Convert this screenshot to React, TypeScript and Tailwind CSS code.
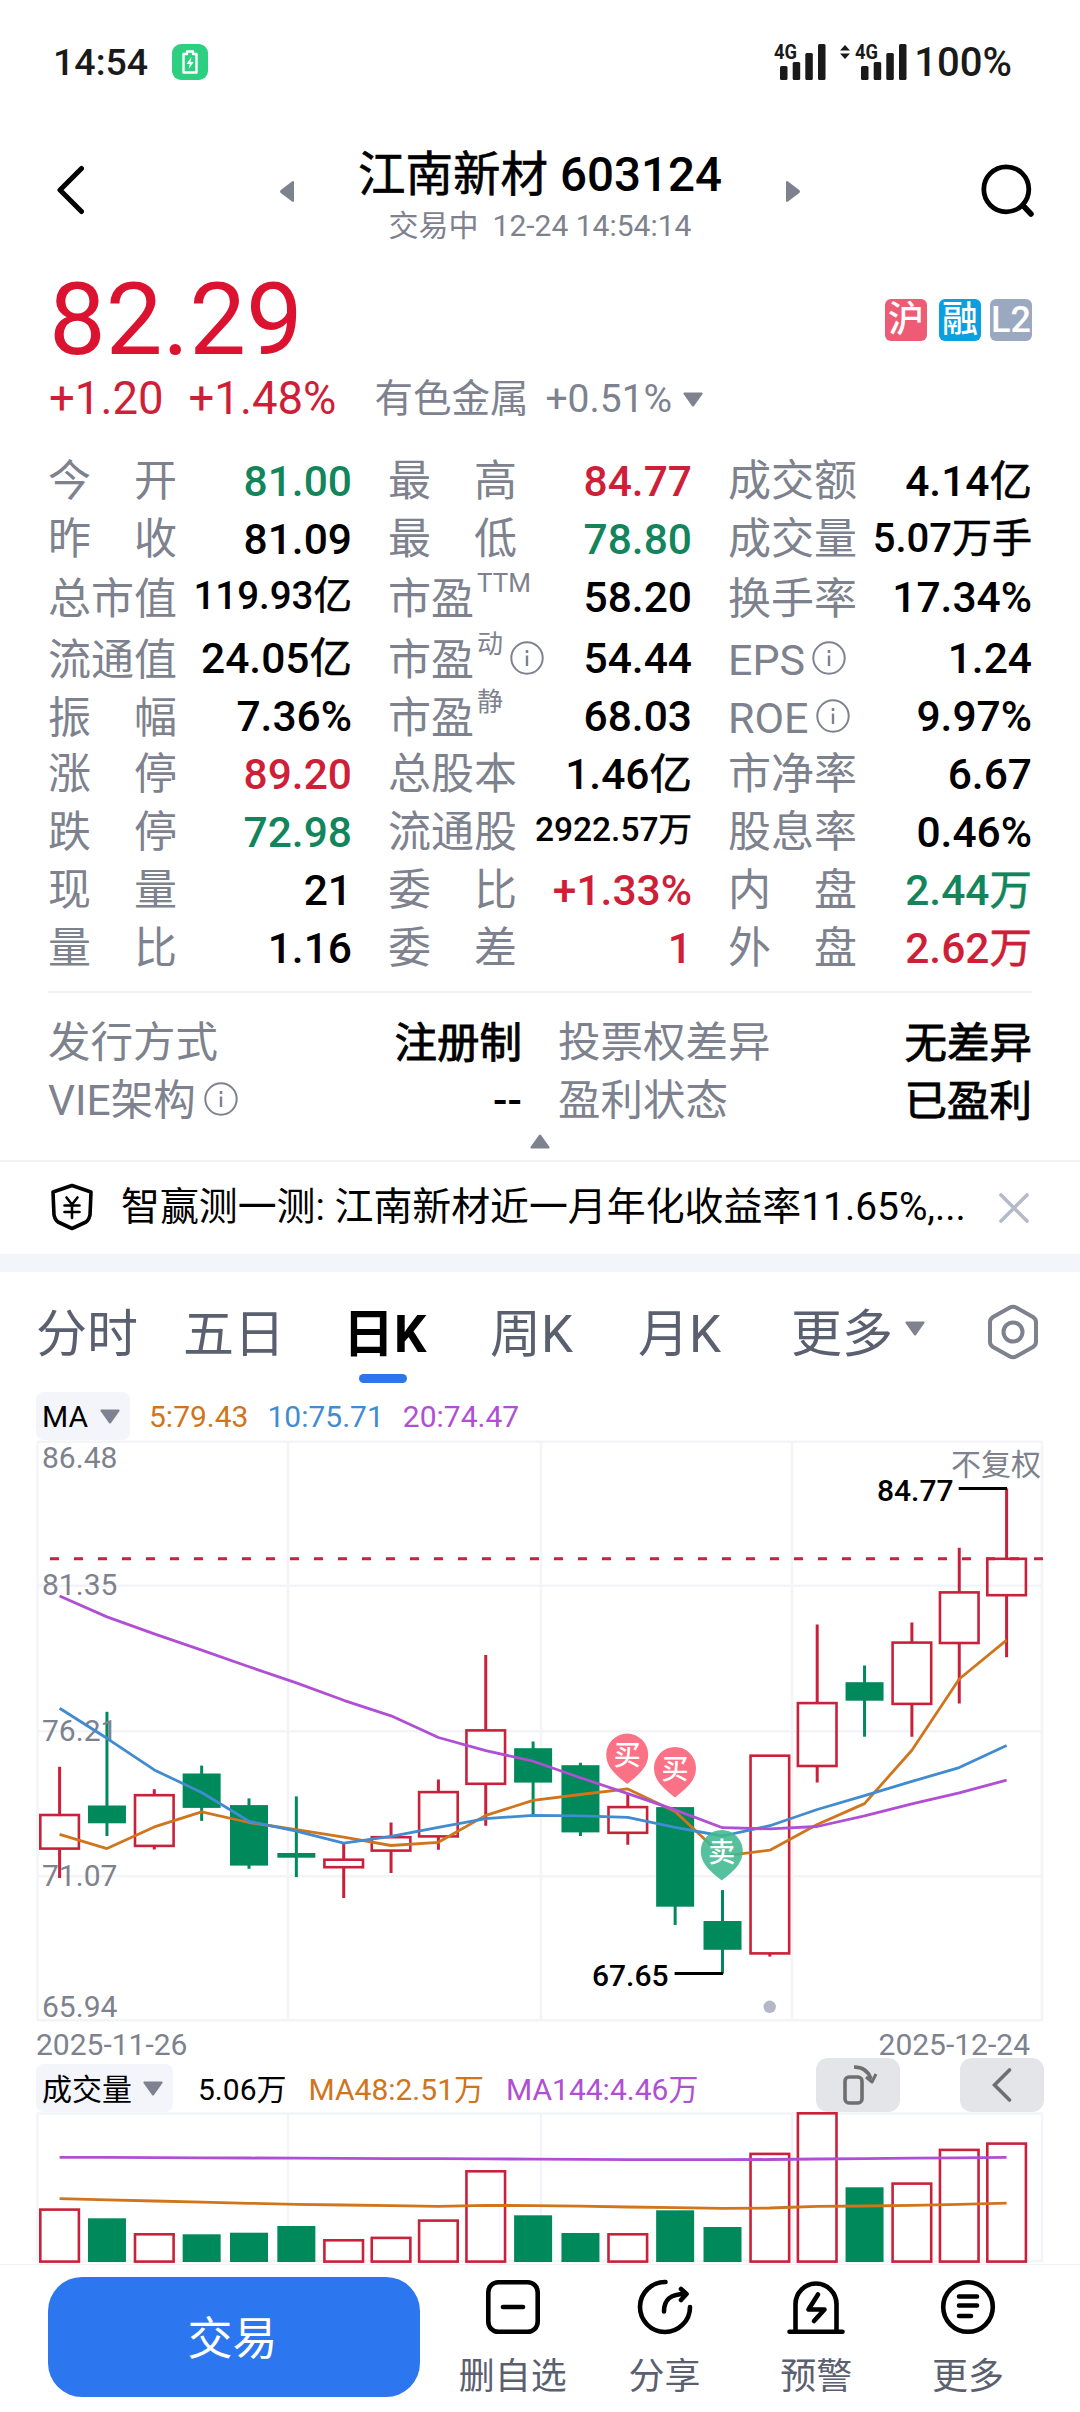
import type { ReactNode } from "react";

const RED = "#c9213a";
const GREEN = "#00895b";
const ORANGE = "#d0751c";
const BLUE = "#418bd0";
const PURPLE = "#b04fd4";

const STEP = 47.35;
const cx = (i: number) => 23.6 + i * STEP;

// [body top, body bottom, high, low, rising]
const candles: [number, number, number, number, boolean][] = [
  [375, 408.6, 326.8, 437.9, true],
  [365.5, 383.3, 271.8, 396, false],
  [355.2, 405.9, 349.3, 409.4, true],
  [333.5, 367.9, 325.6, 380.9, false],
  [365.1, 425.6, 358.4, 428.8, false],
  [413, 417.7, 356.4, 437.1, false],
  [419.7, 427.2, 403.9, 458.1, true],
  [397.2, 410.6, 382.5, 433.1, true],
  [352.1, 396.4, 339.4, 409.8, true],
  [290.4, 343.8, 214.9, 385.7, true],
  [308.2, 342.6, 301.5, 375.4, false],
  [325.2, 392.4, 322.8, 396, false],
  [367.1, 392.8, 353.7, 404.7, true],
  [367.1, 466.7, 367.1, 484.9, false],
  [481, 509.8, 450.1, 533.6, false],
  [315.7, 513.4, 315.7, 516.6, true],
  [263.1, 326, 184.4, 342.6, true],
  [242.2, 260.7, 225.5, 296.7, false],
  [202.6, 263.9, 182.4, 296.7, true],
  [152.4, 203, 107.7, 263.5, true],
  [118.8, 155.2, 48.4, 217.2, true],
];

const ma5 = [394.4, 408.6, 386.9, 371.9, 382.5, 389.6, 397.2, 405.5, 402.3, 375.4, 360.4, 354.5, 348.9, 371.5, 416.1, 410.2, 384.5, 363.6, 310.2, 239, 200.2];
const ma10 = [268.3, 298.3, 329.9, 352.5, 381.3, 391.2, 403.1, 396.4, 387.3, 378.6, 375.4, 375.8, 377.4, 387.3, 396, 385.7, 369.5, 355.6, 341.4, 327.6, 305.4];
const ma20 = [156, 176.9, 193.9, 210.1, 226.7, 242.9, 260.3, 275.8, 297.5, 310.6, 321.2, 337.8, 353.7, 369.9, 387.7, 388.9, 386.5, 375.8, 363.9, 352.9, 340.2];

const volumes = [97, 106.3, 121.7, 122.3, 120.7, 114, 127.7, 125.3, 108, 58.7, 103.3, 121, 121.7, 98.3, 115, 41.3, 0.7, 75.3, 71, 37.3, 31];
const vol48 = [86.7, 87.8, 89, 90.2, 91.3, 92.3, 93, 93.7, 94.4, 93.4, 93.6, 94.2, 95, 95.6, 96.3, 96, 94.3, 94, 93.3, 92.4, 91.2];
const vol144 = [45.3, 45.4, 45.6, 45.8, 46, 46.2, 46.4, 46.6, 46.7, 46.9, 47.1, 47.4, 47.6, 47.7, 47.7, 47.5, 47, 46.6, 46.2, 45.8, 45.4];

const toPoints = (ys: number[]) => ys.map((y, i) => `${cx(i)},${y}`).join(" ");

const InfoIcon = ({ className = "" }: { className?: string }) => (
  <svg viewBox="0 0 34 34" className={`w-[34px] h-[34px] shrink-0 ${className}`} fill="none" stroke="#7e828e" strokeWidth="2">
    <circle cx="17" cy="17" r="15.7" />
    <path d="M17 14.5v10.5" strokeWidth="2.4" />
    <path d="M17 9v3" strokeWidth="2.6" />
  </svg>
);

const Down = ({ className = "" }: { className?: string }) => (
  <svg viewBox="0 0 20 15" className={`w-5 h-[15px] shrink-0 ${className}`} fill="#7e828e">
    <path d="M1 0.5h18q1 .5 .5 1.500L11 14q-1 1-2 0L.5 2Q0 1 1 .5z" />
  </svg>
);

type Cell = {
  label: string;
  sup?: string;
  info?: boolean;
  value: string;
  color?: string;
  size?: string;
};

const up = "text-[#cf1f38]";
const down = "text-[#13855c]";

const rows: Cell[][] = [
  [
    { label: "今　开", value: "81.00", color: down },
    { label: "最　高", value: "84.77", color: up },
    { label: "成交额", value: "4.14亿" },
  ],
  [
    { label: "昨　收", value: "81.09" },
    { label: "最　低", value: "78.80", color: down },
    { label: "成交量", value: "5.07万手", size: "text-[40px] relative top-0" },
  ],
  [
    { label: "总市值", value: "119.93亿", size: "text-[38.5px] relative -top-[1px]" },
    { label: "市盈", sup: "TTM", value: "58.20" },
    { label: "换手率", value: "17.34%" },
  ],
  [
    { label: "流通值", value: "24.05亿" },
    { label: "市盈", sup: "动", info: true, value: "54.44" },
    { label: "EPS", info: true, value: "1.24" },
  ],
  [
    { label: "振　幅", value: "7.36%" },
    { label: "市盈", sup: "静", value: "68.03" },
    { label: "ROE", info: true, value: "9.97%" },
  ],
  [
    { label: "涨　停", value: "89.20", color: up },
    { label: "总股本", value: "1.46亿" },
    { label: "市净率", value: "6.67" },
  ],
  [
    { label: "跌　停", value: "72.98", color: down },
    { label: "流通股", value: "2922.57万", size: "text-[33.5px] relative -top-[2px]" },
    { label: "股息率", value: "0.46%" },
  ],
  [
    { label: "现　量", value: "21" },
    { label: "委　比", value: "+1.33%", color: up },
    { label: "内　盘", value: "2.44万", color: down },
  ],
  [
    { label: "量　比", value: "1.16" },
    { label: "委　差", value: "1", color: up },
    { label: "外　盘", value: "2.62万", color: up },
  ],
];

const Signal = () => (
  <svg viewBox="0 0 54 38" className="w-[54px] h-[38px] overflow-visible" fill="#1a1a1a">
    <text x="0" y="15.800" fontSize="21" fontWeight="700" textLength="23" lengthAdjust="spacingAndGlyphs">4G</text>
    <rect x="6" y="23" width="7.500" height="14" rx="1.500" />
    <rect x="18.700" y="19" width="7.500" height="18" rx="1.500" />
    <rect x="31.300" y="10" width="7.500" height="27" rx="1.500" />
    <rect x="44" y="1" width="7.500" height="36" rx="1.500" />
  </svg>
);

const StatusBar = () => (
  <div className="h-[120px] flex items-start justify-between pl-[53px] pr-[68px] pt-[43px] text-[#1a1a1a]">
    <div className="flex items-center h-[38px]">
      <span className="w-[119px] text-[37.5px] leading-[38px] font-medium">14:54</span>
      <svg viewBox="0 0 36 36" className="w-9 h-9">
        <rect width="36" height="36" rx="9" fill="#2dd080" />
        <path d="M15 7.500h6v2.500h3.500v18.500h-13V10H15z" fill="none" stroke="#fff" strokeWidth="2.400" strokeLinejoin="round" />
        <path d="M19.500 13l-5 7h3.200l-1 5 5-7h-3.200z" fill="#fff" />
      </svg>
    </div>
    <div className="flex items-center h-[38px]">
      <Signal />
      <svg viewBox="0 0 10 14" className="w-[10px] h-[14px] ml-3 mb-5 mr-[5px]" fill="#1a1a1a">
        <path d="M5 0l5 5.500H0zM5 14l5-5.500H0z" />
      </svg>
      <Signal />
      <span className="ml-[5px] mt-[2px] text-[40px] leading-[38px] font-medium">100%</span>
    </div>
  </div>
);

const Header = () => (
  <div className="h-[140px] flex items-center justify-between pl-14 pr-[46px]">
    <svg viewBox="0 0 28 50" className="w-7 h-[50px]" fill="none" stroke="#000" strokeWidth="5" strokeLinecap="round" strokeLinejoin="round">
      <path d="M25.500 3.500L4 25l21.500 21.500" />
    </svg>
    <div className="flex items-center ml-4 pt-[2px]">
      <svg viewBox="0 0 14 21" className="w-[14px] h-[21px]" fill="#7e828e">
        <path d="M14 1v19q-.5 1.500-2 .5L.8 12q-1.500-1.500 0-3L12 .5q1.500-1 2 .5z" />
      </svg>
      <div className="w-[492px] flex flex-col items-center pt-[6px]">
        <h1 className="text-[47.5px] leading-[60px] font-medium whitespace-nowrap">
          <span className="font-normal [-webkit-text-stroke:0.6px]">江南新材</span> 603124
        </h1>
        <p className="mt-[3px] text-[30px] leading-9 text-[#7e828e] whitespace-nowrap">
          交易中<span className="ml-[14px]">12-24 14:54:14</span>
        </p>
      </div>
      <svg viewBox="0 0 14 21" className="w-[14px] h-[21px] rotate-180" fill="#7e828e">
        <path d="M14 1v19q-.5 1.500-2 .5L.8 12q-1.500-1.500 0-3L12 .5q1.500-1 2 .5z" />
      </svg>
    </div>
    <svg viewBox="0 0 54 54" className="w-[54px] h-[54px]" fill="none" stroke="#000" strokeWidth="4.800">
      <circle cx="26.300" cy="26.300" r="22.500" />
      <path d="M43 42.500l8 8.500" strokeLinecap="round" strokeWidth="5.500" />
    </svg>
  </div>
);

const Price = () => (
  <div className="h-[192px] pl-[49px] pr-12">
    <div className="flex justify-between items-center h-[118px] pt-[2px]">
      <span className="text-[101px] leading-[118px] text-[#dc1330]">82.29</span>
      <div className="flex text-white text-[36px] leading-[42px] text-center font-medium">
        <span className="w-[42px] h-[42px] rounded-md bg-[#ee5b74]">沪</span>
        <span className="w-[42px] h-[42px] rounded-md bg-[#0b9fe2] ml-3">融</span>
        <span className="w-[42px] h-[42px] rounded-md bg-[#9aa9c0] ml-[9px]">L2</span>
      </div>
    </div>
    <div className="flex items-center h-[42px] text-[45.5px] leading-[42px] text-[#cf1f38]">
      <span>+1.20</span>
      <span className="ml-[25px]">+1.48%</span>
      <span className="ml-[38px] text-[38.500px] text-[#7e828e]">有色金属</span>
      <span className="ml-[17px] text-[39px] text-[#7e828e]">+0.51%</span>
      <Down className="ml-[11px]" />
    </div>
  </div>
);

// digits are medium, chinese units stay lighter
const Value = ({ value }: { value: string }) => {
  const digits = value.replace(/[亿万手]/g, "");
  const unit = value.slice(digits.length);
  return (
    <>
      {digits}
      {unit && <span className="font-normal [-webkit-text-stroke:0.6px]">{unit}</span>}
    </>
  );
};

const Stats = () => (
  <div className="px-12">
    {rows.map((row, r) => (
      <div key={r} className={`grid grid-cols-3 gap-x-9 h-[58px] ${r === 2 ? "mb-[3px]" : ""}`}>
        {row.map((c) => (
          <div key={c.label} className="flex justify-between text-[43px] leading-[58px] whitespace-nowrap">
            <div className="flex items-center text-[#7e828e]">
              <span>{c.label}</span>
              {c.sup && <span className="ml-[3px] mb-8 text-[26px] leading-[30px]">{c.sup}</span>}
              {c.info && <InfoIcon className="ml-[7px] mb-[4px]" />}
            </div>
            <span className={`font-medium ${c.color ?? "text-black"} ${c.size ?? "text-[42.5px] relative top-[1px]"}`}>
              <Value value={c.value} />
            </span>
          </div>
        ))}
      </div>
    ))}
  </div>
);

const Extra = ({ label, value, info }: { label: string; value: string; info?: boolean }) => (
  <div className="flex justify-between text-[42.500px] leading-[58px] h-[58px] whitespace-nowrap">
    <div className="flex items-center text-[#7e828e]">
      {label}
      {info && <InfoIcon className="ml-[8px] mb-[4px]" />}
    </div>
    {value === "--" ? (
      <span className="font-medium text-black">--</span>
    ) : (
      <span className="pt-[1px] text-black [-webkit-text-stroke:0.9px]">{value}</span>
    )}
  </div>
);

const Notice = () => (
  <div className="h-[94px] border-t-2 border-[#f1f2f5] flex items-center pl-[50px] pr-[51px] shrink-0">
    <svg viewBox="0 0 44 48" className="w-11 h-12 mb-[2px]" fill="none" stroke="#000" strokeWidth="3.600" strokeLinejoin="round" strokeLinecap="round">
      <path d="M22 2.500l19 6.500-1 23q-1 5-4 7L22 45.500 8 39q-3-2-4-7L3 9z" />
      <path d="M16.500 14.500l5.500 7 5.500-7M22 22v13M14.500 22.500h15M14.500 29h15" strokeWidth="2.600" />
    </svg>
    <p className="ml-[27px] mb-[2px] w-[850px] text-[38.9px] leading-[50px] whitespace-nowrap">智赢测一测: 江南新材近一月年化收益率11.65%,...</p>
    <svg viewBox="0 0 30 30" className="ml-auto w-[30px] h-[30px]" stroke="#b4bac8" strokeWidth="3.600" strokeLinecap="round">
      <path d="M2 2l26 26M28 2L2 28" />
    </svg>
  </div>
);

const Tabs = () => (
  <div className="h-[120px] flex pl-9 pr-[41px] pt-[24px] text-[51px] leading-[78px] text-[#5b6070] whitespace-nowrap">
    <span className="w-[147px]">分时</span>
    <span className="w-[160px]">五日</span>
    <div className="w-[147px] flex flex-col">
      <span className="font-bold text-black">日K</span>
      <span className="ml-[16px] w-12 h-[9px] rounded-full bg-[#2c76ec]" />
    </div>
    <span className="w-[148px]">周K</span>
    <span className="w-[153px]">月K</span>
    <span>更多</span>
    <Down className="ml-[12px] mt-[25px]" />
    <svg viewBox="0 0 52 56" className="ml-auto mt-[8px] w-[52px] h-14" fill="none" stroke="#7e828e" strokeWidth="4" strokeLinejoin="round">
      <path d="M22.500 3.800q3.500-2 7 0L46 13q3 2 3 5v20q0 3-3 5l-16.500 9.200q-3.500 2-7 0L6 43q-3-2-3-5V18q0-3 3-5z" />
      <circle cx="26" cy="28" r="9.500" />
    </svg>
  </div>
);

const Pin = ({ x, y, fill, text }: { x: number; y: number; fill: string; text: string }) => (
  <g transform={`translate(${x} ${y})`}>
    <path d="M0 0A21 21 0 0 1 21 21C21 35 9 43 0 50.500C-9 43-21 35-21 21A21 21 0 0 1 0 0z" fill={fill} />
    <text x="0" y="31.500" fontSize="27" fontWeight="500" textAnchor="middle" fill="#fff">{text}</text>
  </g>
);

const Grid = ({ ys, bottom }: { ys: number[]; bottom: number }) => (
  <g stroke="#f3f4f8" strokeWidth="2.500">
    {ys.map((y) => (
      <path key={y} d={`M1 ${y}H1007`} />
    ))}
    {[1.5, 252, 505, 756, 1006].map((x) => (
      <path key={x} d={`M${x} 2V${bottom}`} />
    ))}
  </g>
);

const KChart = () => (
  <svg viewBox="0 0 1008 582" className="block w-[1008px] h-[582px]" fill="none">
    <Grid ys={[1.7, 145.7, 291.2, 436.3, 580.2]} bottom={580} />
    <path d="M14 118.800H1008" stroke={RED} strokeWidth="3" strokeDasharray="9 15" />
    {candles.map(([top, bottom, high, low, rising], i) =>
      rising ? (
        <g key={i} stroke={RED}>
          <path d={`M${cx(i)} ${high}V${top}M${cx(i)} ${bottom}V${low}`} strokeWidth="3" />
          <rect x={cx(i) - 19.3} y={top} width="38.600" height={bottom - top} strokeWidth="2.600" />
        </g>
      ) : (
        <g key={i}>
          <path d={`M${cx(i)} ${high}V${low}`} stroke={GREEN} strokeWidth="3" />
          <rect x={cx(i) - 19} y={top} width="38" height={bottom - top} fill={GREEN} />
        </g>
      )
    )}
    <g fill="#7e828e" fontSize="30">
      <text x="6" y="28">86.48</text>
      <text x="6" y="155">81.35</text>
      <text x="6" y="300.500">76.21</text>
      <text x="6" y="446">71.07</text>
      <text x="6" y="576.500">65.94</text>
      <text x="915" y="35">不复权</text>
    </g>
    <g strokeWidth="2.800" strokeLinejoin="round">
      <polyline points={toPoints(ma5)} stroke={ORANGE} />
      <polyline points={toPoints(ma10)} stroke={BLUE} />
      <polyline points={toPoints(ma20)} stroke={PURPLE} />
    </g>
    <path d="M922.700 48.400h48.400M638.600 533.600h48.400" stroke="#000" strokeWidth="3" />
    <g fill="#000" fontSize="30" fontWeight="500">
      <text x="841" y="61">84.77</text>
      <text x="556" y="546">67.65</text>
    </g>
    <Pin x={591.2} y={293.6} fill="#fb7185" text="买" />
    <Pin x={639} y={307} fill="#fb7185" text="买" />
    <Pin x={685.8} y={390} fill="rgba(64,184,144,0.88)" text="卖" />
    <circle cx="733.700" cy="566.800" r="6.200" fill="#b4b8c6" />
  </svg>
);

const VolumeChart = () => (
  <svg viewBox="0 0 1008 152" className="block w-[1008px] h-[152px]" fill="none">
    <Grid ys={[1.5, 149]} bottom={149} />
    {volumes.map((top, i) =>
      candles[i][4] ? (
        <rect key={i} x={cx(i) - 19.3} y={top + 0.6} width="38.600" height={149 - top} stroke={RED} strokeWidth="2.600" />
      ) : (
        <rect key={i} x={cx(i) - 19} y={top} width="38" height={150 - top} fill={GREEN} />
      )
    )}
    <polyline points={toPoints(vol144)} stroke={PURPLE} strokeWidth="2.800" />
    <polyline points={toPoints(vol48)} stroke={ORANGE} strokeWidth="2.800" />
  </svg>
);

const Action = ({ label, children }: { label: string; children: ReactNode }) => (
  <div className="flex-1 flex flex-col items-center">
    <svg viewBox="0 0 60 60" className="w-[60px] h-[60px]" fill="none" stroke="#000" strokeWidth="4.600" strokeLinecap="round" strokeLinejoin="round">
      {children}
    </svg>
    <span className="mt-4 text-[36px] leading-[48px] text-[#5b6070] whitespace-nowrap">{label}</span>
  </div>
);

const BottomBar = () => (
  <div className="h-[148px] border-t border-[#f1f2f5] bg-white flex pl-12 pr-9 pt-3">
    <button className="w-[372px] h-[120px] rounded-[34px] bg-[#2c76f0] text-white text-[45px] mr-[17px] pt-[6px] pr-[3px]">交易</button>
    <Action label="删自选">
      <rect x="5.300" y="5.300" width="49.400" height="49.400" rx="10" />
      <path d="M20 30h20" />
    </Action>
    <Action label="分享">
      <path d="M30.500 5A25 25 0 1 0 55 30" />
      <path d="M29 34.500C29 22 36 17 50 17M46 12l5.500 5L46 23" />
    </Action>
    <Action label="预警">
      <path d="M9.500 54.500V27a20.500 20.500 0 0 1 41 0v27.500M3.500 54.700h53" />
      <path d="M32 17.500L22.500 32.500H38.500L28 44" />
    </Action>
    <Action label="更多">
      <circle cx="30" cy="30" r="24.800" />
      <path d="M21 19.500h18M21 28.500h18M21 39h12" />
    </Action>
  </div>
);

const App = () => {
  return (
    <div className="w-[1080px] h-[2412px] overflow-hidden bg-white text-black flex flex-col [font-family:Roboto,'Noto_Sans_CJK_SC',sans-serif]">
      <StatusBar />
      <Header />
      <Price />
      <Stats />
      <div className="mx-12 mt-[14px] pt-[21px] border-t-2 border-[#f1f2f5] grid grid-cols-2 gap-x-9">
        <Extra label="发行方式" value="注册制" />
        <Extra label="投票权差异" value="无差异" />
        <Extra label="VIE架构" value="--" info />
        <Extra label="盈利状态" value="已盈利" />
      </div>
      <div className="h-[30px] flex justify-center pt-1">
        <Down className="rotate-180" />
      </div>
      <Notice />
      <div className="h-[18px] bg-[#f4f5fa] shrink-0" />
      <Tabs />
      {/* MA */}
      <div className="h-12 flex items-center ml-9 text-[30px] leading-[48px]">
        <div className="w-[94px] h-12 rounded-lg bg-[#f4f5fa] flex items-center pl-[6px]">
          <span className="pt-[2px]">MA</span>
          <Down className="ml-[12px]" />
        </div>
        <span className="pt-[2px] ml-[19px] text-[#d0751c]">5:79.43</span>
        <span className="pt-[2px] ml-[19px] text-[#418bd0]">10:75.71</span>
        <span className="pt-[2px] ml-[19px] text-[#b04fd4]">20:74.47</span>
      </div>
      <div className="mx-9">
        <KChart />
      </div>
      <div className="h-9 flex justify-between pl-9 pr-[50px] pt-1 text-[30px] leading-[38px] text-[#7e828e]">
        <span>2025-11-26</span>
        <span>2025-12-24</span>
      </div>
      {/* volume */}
      <div className="h-[54px] mx-9 flex items-end text-[30px] leading-[45px] whitespace-nowrap">
        <div className="w-[137px] h-12 rounded-lg bg-[#f4f5fa] flex items-center pl-[6px]">
          <span className="pt-[3px]">成交量</span>
          <Down className="ml-[11px]" />
        </div>
        <span className="ml-[25px]">5.06万</span>
        <span className="ml-[22px] text-[#d0751c]">MA48:2.51万</span>
        <span className="ml-[22px] text-[#b04fd4]">MA144:4.46万</span>
        <div className="ml-auto w-[84px] h-[54px] rounded-xl bg-[#e4e5e9] flex items-center justify-center">
          <svg viewBox="0 0 40 42" className="w-10 h-[42px]" fill="none" stroke="#6f6f6f" strokeWidth="3.600" strokeLinejoin="round">
            <rect x="7" y="13" width="17" height="26" rx="4" />
            <path d="M16 3Q29 3 33 15" />
            <path d="M28 13l6 5 4-8" strokeWidth="3" />
          </svg>
        </div>
        <div className="ml-[60px] w-[84px] h-[54px] rounded-xl bg-[#e4e5e9] flex items-center justify-center">
          <svg viewBox="0 0 20 34" className="w-5 h-[34px]" fill="none" stroke="#6f6f6f" strokeWidth="3.600" strokeLinecap="round">
            <path d="M17.500 2L2.500 17l15 15" />
          </svg>
        </div>
      </div>
      <div className="mx-9">
        <VolumeChart />
      </div>
      <BottomBar />
    </div>
  );
};

export default App;
